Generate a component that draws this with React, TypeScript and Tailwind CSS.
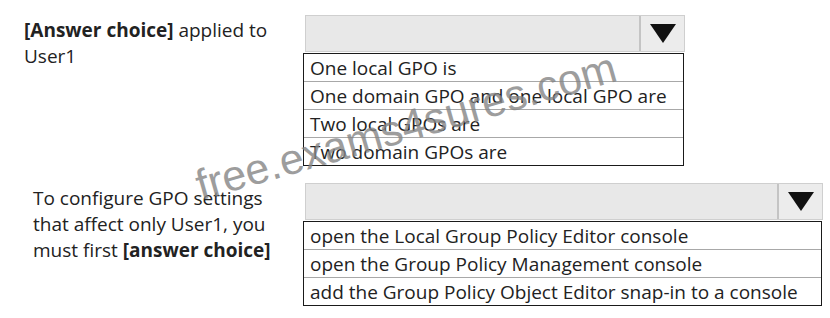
import React from "react";

function Triangle() {
  return (
    <svg width="26" height="19" viewBox="0 0 26 19">
      <polygon points="0,0 26,0 13,19" fill="#111" />
    </svg>
  );
}

function Dropdown({
  width,
  options,
}: {
  width: number;
  options: string[];
}) {
  return (
    <div className="flex flex-col" style={{ width: width + 2 }}>
      <div
        className="ml-[2px] h-[37px] flex border border-[#cfcfcf] bg-[#e8e8e8]"
        style={{ width }}
      >
        <div className="flex-1" />
        <div className="w-[45px] border-l-2 border-[#c4c4c4] flex items-center justify-center bg-[#ececec]">
          <Triangle />
        </div>
      </div>
      <div
        className="mt-[1px] border-[1.5px] border-[#1a1a1a] bg-white flex flex-col"
        style={{ width: width + 1 }}
      >
        {options.map((o, i) => (
          <div
            key={i}
            className={
              "pl-[6px] pt-[2px] flex items-center whitespace-nowrap text-[19px] leading-none " +
              (i < options.length - 1 ? "border-b border-[#a8a8a8]" : "")
            }
            style={{ height: i < options.length - 1 ? 28 : 27 }}
          >
            {o}
          </div>
        ))}
      </div>
    </div>
  );
}

export default function App() {
  return (
    <div className="relative w-[830px] h-[318px] bg-white overflow-hidden font-['Open_Sans',sans-serif] text-[#222]">
      <div className="flex pt-[15px]">
        <div className="w-[303px] pl-[24px] pt-[2px] text-[19px] leading-[26px]">
          <span className="font-bold">[Answer choice]</span> applied to
          <br />
          User1
        </div>
        <Dropdown
          width={380}
          options={[
            "One local GPO is",
            "One domain GPO and one local GPO are",
            "Two local GPOs are",
            "Two domain GPOs are",
          ]}
        />
      </div>
      <div className="flex mt-[17px]">
        <div className="w-[303px] pl-[33px] pt-[2px] text-[19px] leading-[26px]">
          To configure GPO settings
          <br />
          that affect only User1, you
          <br />
          must first <span className="font-bold">[answer choice]</span>
        </div>
        <Dropdown
          width={518}
          options={[
            "open the Local Group Policy Editor console",
            "open the Group Policy Management console",
            "add the Group Policy Object Editor snap-in to a console",
          ]}
        />
      </div>
      <div className="absolute left-[186px] top-[100px] w-[440px] h-[52px] flex items-center justify-center rotate-[-16deg] pointer-events-none">
        <span className="font-['Liberation_Sans',sans-serif] text-[43px] leading-none text-[#858585] opacity-80 whitespace-nowrap">
          free.exams4sures.com
        </span>
      </div>
    </div>
  );
}
